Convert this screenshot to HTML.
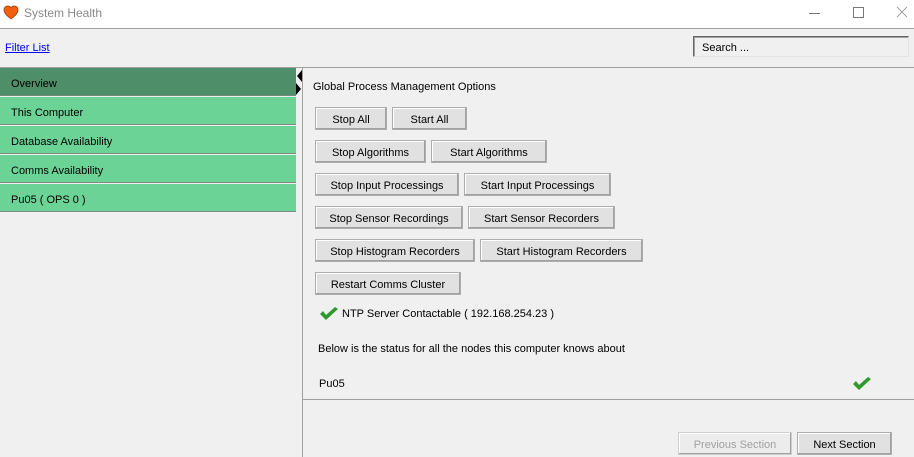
<!DOCTYPE html>
<html><head><style>
body{margin:0;width:914px;height:457px;background:#f0f0f0;font-family:"Liberation Sans",sans-serif;font-size:11px;color:#000;position:relative;overflow:hidden}
.a{position:absolute}
.btn{position:absolute;height:21px;background:#e1e1e1;border:1px solid #adadad;box-shadow:inset -1px -1px 0 #a0a0a0, inset 1px 1px 0 #fff;text-align:center;line-height:25px;box-sizing:content-box;overflow:hidden}
.item{position:absolute;left:0;width:296px;height:28px;background:#6cd396;border-bottom:1px solid #7d8a80;line-height:32px;padding-left:11px;box-sizing:border-box;font-size:11px;overflow:hidden}
</style></head><body>
<div class="a" style="left:0;top:0;width:914px;height:28px;background:#fff;border-bottom:1px solid #a0a0a0"></div>
<svg class="a" style="left:3px;top:5px" width="16" height="15" viewBox="0 0 16 15"><path d="M8 14 C3 10 1 8 1 5 C1 2 3 1 5 1 C6.5 1 7.5 2 8 3 C8.5 2 9.5 1 11 1 C13 1 15 2 15 5 C15 8 13 10 8 14Z" fill="#f06010" stroke="#a03a00" stroke-width="0.8"/></svg>
<div class="a" style="left:24px;top:6px;font-size:12px;color:#888">System Health</div>
<div class="a" style="left:809px;top:13px;width:11px;height:1px;background:#777"></div>
<div class="a" style="left:853px;top:7px;width:9px;height:9px;border:1px solid #777"></div>
<svg class="a" style="left:896px;top:6px" width="12" height="12"><path d="M1 1L11 11M11 1L1 11" stroke="#888" stroke-width="0.8"/></svg>
<div class="a" style="left:5px;top:42px;color:#00f;text-decoration:underline">Filter List</div>
<div class="a" style="left:693px;top:36px;width:216px;height:21px;border:1px solid #646464;border-right-color:#e3e3e3;border-bottom-color:#e3e3e3;box-shadow:inset 1px 1px 0 #a0a0a0;background:#f0f0f0;line-height:22px;padding-left:8px;box-sizing:border-box">Search ...</div>
<div class="a" style="left:0;top:67px;width:914px;height:1px;background:#a0a0a0"></div>
<div class="item" style="top:68px;background:#4e8e68;border-bottom-color:#6f8a78">Overview</div>
<div class="item" style="top:97px">This Computer</div>
<div class="item" style="top:126px">Database Availability</div>
<div class="item" style="top:155px">Comms Availability</div>
<div class="item" style="top:184px">Pu05 ( OPS 0 )</div>
<div class="a" style="left:302px;top:68px;width:1px;height:389px;background:#a0a0a0"></div>
<svg class="a" style="left:296px;top:70px" width="7" height="28"><path d="M6 0L1 6L6 12Z M0 13L5 19L0 25Z" fill="#000"/></svg>
<div class="a" style="left:313px;top:81px">Global Process Management Options</div>
<div class="btn" style="left:315px;top:107px;width:70px">Stop All</div>
<div class="btn" style="left:392px;top:107px;width:73px">Start All</div>
<div class="btn" style="left:315px;top:140px;width:109px">Stop Algorithms</div>
<div class="btn" style="left:431px;top:140px;width:114px">Start Algorithms</div>
<div class="btn" style="left:315px;top:173px;width:142px">Stop Input Processings</div>
<div class="btn" style="left:464px;top:173px;width:145px">Start Input Processings</div>
<div class="btn" style="left:315px;top:206px;width:146px">Stop Sensor Recordings</div>
<div class="btn" style="left:468px;top:206px;width:145px">Start Sensor Recorders</div>
<div class="btn" style="left:315px;top:239px;width:158px">Stop Histogram Recorders</div>
<div class="btn" style="left:480px;top:239px;width:161px">Start Histogram Recorders</div>
<div class="btn" style="left:315px;top:272px;width:144px">Restart Comms Cluster</div>
<svg class="a" style="left:319px;top:306px" width="20" height="15"><path d="M1 8L7 14L19 3L16 1L7 9L4 5Z" fill="#2e9a2e"/></svg>
<div class="a" style="left:342px;top:308px">NTP Server Contactable ( 192.168.254.23 )</div>
<div class="a" style="left:318px;top:343px">Below is the status for all the nodes this computer knows about</div>
<div class="a" style="left:319px;top:378px">Pu05</div>
<svg class="a" style="left:852px;top:376px" width="20" height="15"><path d="M1 8L7 14L19 3L16 1L7 9L4 5Z" fill="#2e9a2e"/></svg>
<div class="a" style="left:303px;top:399px;width:611px;height:1px;background:#a0a0a0"></div>
<div class="btn" style="left:678px;top:432px;width:112px;color:#a0a0a0;background:#ececec;border-color:#cfcfcf">Previous Section</div>
<div class="btn" style="left:797px;top:432px;width:93px">Next Section</div>
</body></html>
